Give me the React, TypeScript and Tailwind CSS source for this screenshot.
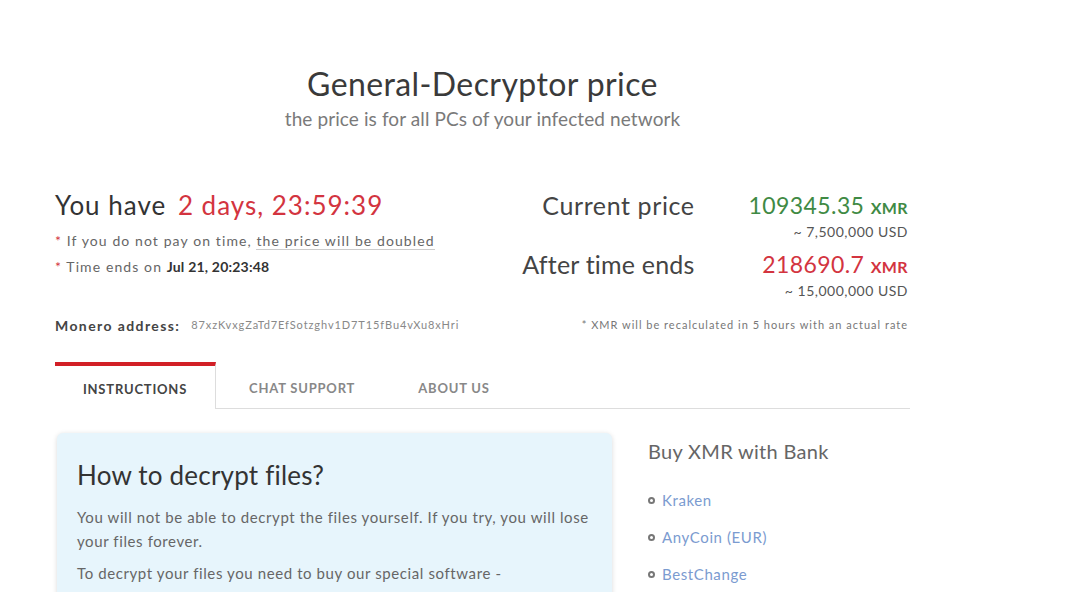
import React from 'react';

const font = { fontFamily: 'Lato, "Open Sans", sans-serif' };

function PriceRow({ label, amount, usd, color, track }: { label: string; amount: string; usd: string; color: string; track: string }) {
  return (
    <>
      <div className={`text-right text-[25px] leading-[30px] text-[#444] ${track}`}>{label}</div>
      <div className="text-right">
        <div className={`text-[23px] leading-[30px] tracking-[0.4px] ${color}`}>
          {amount} <span className="text-[16px] font-bold uppercase">XMR</span>
        </div>
        <div className="text-[14px] leading-[18px] tracking-[0.5px] text-[#555]">~ {usd} USD</div>
      </div>
    </>
  );
}

export default function App() {
  const links = ['Kraken', 'AnyCoin (EUR)', 'BestChange'];

  return (
    <div className="w-[1080px] h-[592px] overflow-hidden bg-white" style={font}>
      <div className="ml-[55px] w-[855px] pt-[65px]">
        {/* heading */}
        <div className="text-center">
          <h1 className="text-[32px] leading-[38px] tracking-[0.4px] text-[#3a3a3a]">General-Decryptor price</h1>
          <p className="mt-[4px] text-[19px] leading-[24px] tracking-[0.1px] text-[#7a7a7a]">
            the price is for all PCs of your infected network
          </p>
        </div>

        {/* timer + prices */}
        <div className="mt-[59px] flex justify-between">
          <div>
            <div className="text-[26px] leading-[30px] tracking-[1px] text-[#333]">
              You have <span className="ml-1 text-[#d3343f]">2 days, 23:59:39</span>
            </div>
            <div className="mt-[8px] text-[14px] leading-[26px] tracking-[1.1px] text-[#666]">
              <div>
                <span className="text-[#d3343f]">*</span> If you do not pay on time,{' '}
                <span className="border-b border-[#ccc]">the price will be doubled</span>
              </div>
              <div>
                <span className="text-[#d3343f]">*</span> Time ends on{' '}
                <span className="font-bold tracking-[0.2px] text-[#333]">Jul 21, 20:23:48</span>
              </div>
            </div>
          </div>

          <div className="grid grid-cols-[auto_auto] gap-x-[54px] gap-y-[8px] pr-[2px]">
            <PriceRow label="Current price" amount="109345.35" usd="7,500,000" color="text-[#3f8a44]" track="tracking-[0.6px]" />
            <PriceRow label="After time ends" amount="218690.7" usd="15,000,000" color="text-[#d3343f]" track="tracking-[0.2px]" />
          </div>
        </div>

        {/* address */}
        <div className="mt-[15px] flex items-center justify-between">
          <div className="flex items-center gap-[11px]">
            <span className="text-[14px] font-bold tracking-[1.4px] text-[#444]">Monero address:</span>
            <span className="text-[11px] tracking-[0.9px] text-[#888]">87xzKvxgZaTd7EfSotzghv1D7T15fBu4vXu8xHri</span>
          </div>
          <span className="pr-[2px] text-[11px] tracking-[1px] text-[#777]">* XMR will be recalculated in 5 hours with an actual rate</span>
        </div>

        {/* tabs */}
        <div className="mt-[26px] flex">
          <div className="flex h-[47px] w-[161px] justify-center border-t-4 border-r border-t-[#d21f26] border-r-[#ddd] pt-[14px] text-[13px] font-bold uppercase tracking-[0.8px] text-[#444]">
            Instructions
          </div>
          <div className="flex flex-1 items-end border-b border-[#ddd]">
            <div className="flex h-[46px] gap-[63px] pl-[33px] pt-[17px] text-[13px] font-bold uppercase tracking-[0.8px] text-[#888]">
              <span>Chat Support</span>
              <span>About Us</span>
            </div>
          </div>
        </div>

        {/* body */}
        <div className="mt-[24px] flex gap-[36px]">
          <div className="ml-[2px] w-[555px] rounded-md bg-[#e7f5fc] px-[20px] pt-[26px] pb-6 shadow-[0_1px_5px_rgba(0,0,0,0.15)]">
            <h2 className="text-[26px] leading-[32px] tracking-[0.2px] text-[#333]">How to decrypt files?</h2>
            <p className="mt-[14px] text-[15px] leading-[24px] tracking-[0.6px] text-[#666]">
              You will not be able to decrypt the files yourself. If you try, you will lose your files forever.
            </p>
            <p className="mt-[8px] text-[15px] leading-[24px] tracking-[0.6px] text-[#666]">
              To decrypt your files you need to buy our special software -{' '}
              <span className="whitespace-nowrap">General-Decryptor.</span>
            </p>
          </div>

          <div className="pt-[5px]">
            <h3 className="text-[20px] leading-[26px] tracking-[0.3px] text-[#666]">Buy XMR with Bank</h3>
            <ul className="mt-[24px] flex flex-col gap-[13px]">
              {links.map(l => (
                <li key={l} className="flex items-center gap-[7px] text-[15px] leading-[24px] tracking-[0.6px]">
                  <span className="h-[7px] w-[7px] rounded-full border-2 border-[#777]" />
                  <a href="#" className="text-[#7b9bd0]">{l}</a>
                </li>
              ))}
            </ul>
          </div>
        </div>
      </div>
    </div>
  );
}
